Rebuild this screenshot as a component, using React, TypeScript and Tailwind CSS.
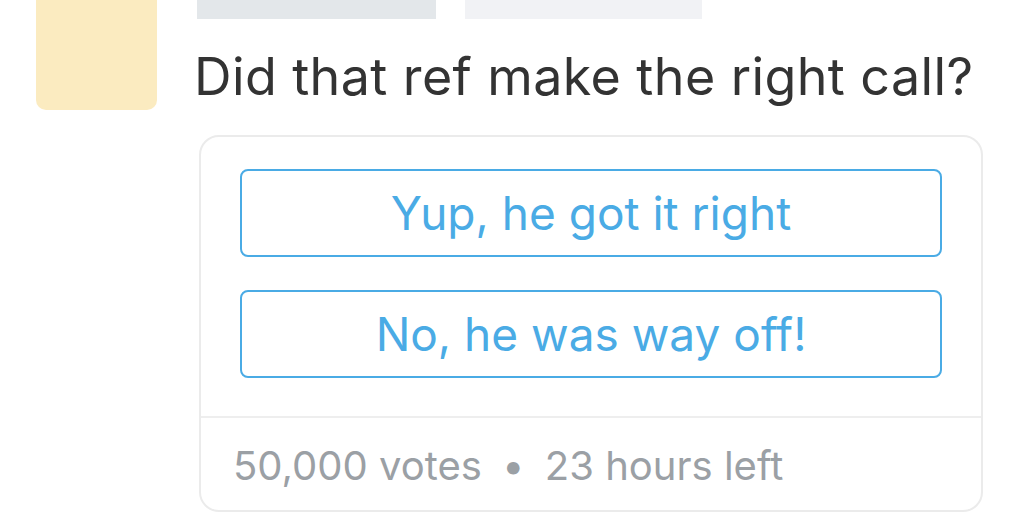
export default function App() {
  return (
    <div className="w-[1024px] h-[512px] overflow-hidden bg-white flex" style={{ fontFamily: "Inter, 'Noto Sans', sans-serif" }}>
      <div className="w-[36px] shrink-0" />
      <div className="w-[121px] h-[110px] shrink-0 bg-[#fbebc0] rounded-b-[10px]" />
      <div className="flex-1 flex flex-col pl-[37px]">
        <div className="flex gap-[29px] pl-[3px]">
          <div className="w-[239px] h-[19px] bg-[#e3e7ea]" />
          <div className="w-[237px] h-[19px] bg-[#f1f2f5]" />
        </div>
        <div className="mt-[28px] text-[52px] leading-[60px] text-[#333333] tracking-[0.4px]">Did that ref make the right call?</div>
        <div className="mt-[28px] ml-[5px] w-[784px] border-2 border-[#ebebeb] rounded-[20px] flex flex-col">
          <div className="px-[39px] pt-[32px] pb-[38px] flex flex-col gap-[33px]">
            <div className="h-[88px] border-2 border-[#4aabe5] rounded-[8px] flex items-center justify-center text-[46px] text-[#4aabe5]">Yup, he got it right</div>
            <div className="h-[88px] border-2 border-[#4aabe5] rounded-[8px] flex items-center justify-center text-[46px] text-[#4aabe5]">No, he was way off!</div>
          </div>
          <div className="h-[2px] bg-[#eeeeee]" />
          <div className="pl-[32px] pt-[24px] pb-[20px] text-[40px] text-[#9ba0a5] leading-[48px]">50,000 votes <span className="mx-[9px]">•</span> 23 hours left</div>
        </div>
      </div>
    </div>
  );
}
